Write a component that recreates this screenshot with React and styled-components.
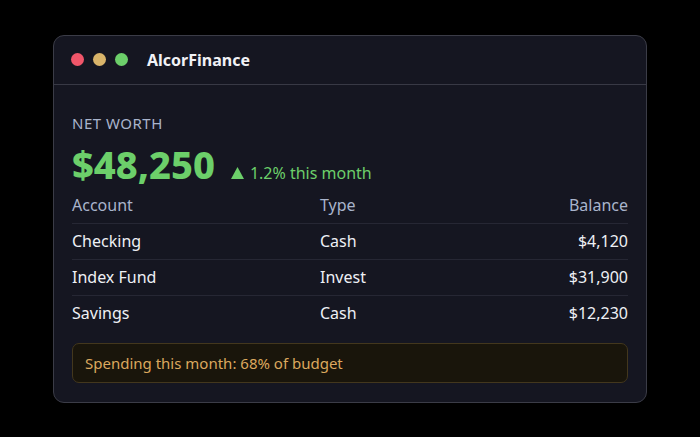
import React from "react";
import styled, { createGlobalStyle } from "styled-components";

const Global = createGlobalStyle`
  html, body { margin: 0; padding: 0; background: #000; }
  body { font-family: "Noto Sans", "Open Sans", sans-serif; }
`;

const Page = styled.div`
  width: 700px;
  height: 437px;
  display: flex;
  align-items: center;
  justify-content: center;
  background: #000;
`;

const Window = styled.div`
  width: 594px;
  height: 368px;
  box-sizing: border-box;
  background: #151621;
  border: 1px solid #3b3c47;
  border-radius: 11px;
  overflow: hidden;
`;

const TitleBar = styled.div`
  height: 48px;
  display: flex;
  align-items: center;
  gap: 9px;
  padding: 0 17px;
  border-bottom: 1px solid #383945;
`;

const Dot = styled.span`
  width: 13px;
  height: 13px;
  border-radius: 50%;
  background: ${(p) => p.color};
`;

const Title = styled.span`
  margin-left: 10px;
  color: #f1f2f6;
  font-weight: 700;
  font-size: 16px;
`;

const Body = styled.div`
  padding: 27px 18px 19px;
`;

const Label = styled.div`
  color: #a9b4cc;
  font-size: 15px;
  letter-spacing: 0.5px;
  line-height: 22px;
`;

const Headline = styled.div`
  display: flex;
  align-items: baseline;
  gap: 16px;
  margin-top: 8px;
`;

const Amount = styled.span`
  color: #6ccf6a;
  font-weight: 800;
  font-size: 38px;
  line-height: 44px;
`;

const Change = styled.span`
  display: inline-flex;
  align-items: center;
  gap: 6px;
  color: #6ccf6a;
  font-size: 16px;
`;

const Arrow = styled.svg`
  width: 13px;
  height: 12px;
  fill: currentColor;
`;

const Table = styled.div`
  margin-top: 2px;
`;

const Row = styled.div`
  display: grid;
  grid-template-columns: 248px 1fr auto;
  align-items: center;
  height: 35px;
  border-top: ${(p) => (p.$first ? "none" : "1px solid #262734")};
  color: ${(p) => (p.$head ? "#a9b4cc" : "#eef0f5")};
  font-size: 16px;
`;

const Right = styled.span`
  text-align: right;
`;

const Notice = styled.div`
  margin-top: 12px;
  height: 40px;
  box-sizing: border-box;
  display: flex;
  align-items: center;
  padding: 0 12px;
  background: #19150b;
  border: 1px solid #43371d;
  border-radius: 7px;
  color: #dca85e;
  font-size: 15px;
`;

const accounts = [
  { name: "Checking", type: "Cash", balance: "$4,120" },
  { name: "Index Fund", type: "Invest", balance: "$31,900" },
  { name: "Savings", type: "Cash", balance: "$12,230" },
];

export default function App() {
  return (
    <>
      <Global />
      <Page>
        <Window>
          <TitleBar>
            <Dot color="#f0566a" />
            <Dot color="#d9b46a" />
            <Dot color="#6ccf6a" />
            <Title>AlcorFinance</Title>
          </TitleBar>
          <Body>
            <Label>NET WORTH</Label>
            <Headline>
              <Amount>$48,250</Amount>
              <Change>
                <Arrow viewBox="0 0 13 12">
                  <path d="M6.5 0 L13 12 L0 12 Z" />
                </Arrow>
                1.2% this month
              </Change>
            </Headline>
            <Table>
              <Row $head $first>
                <span>Account</span>
                <span>Type</span>
                <Right>Balance</Right>
              </Row>
              {accounts.map((a) => (
                <Row key={a.name}>
                  <span>{a.name}</span>
                  <span>{a.type}</span>
                  <Right>{a.balance}</Right>
                </Row>
              ))}
            </Table>
            <Notice>Spending this month: 68% of budget</Notice>
          </Body>
        </Window>
      </Page>
    </>
  );
}
